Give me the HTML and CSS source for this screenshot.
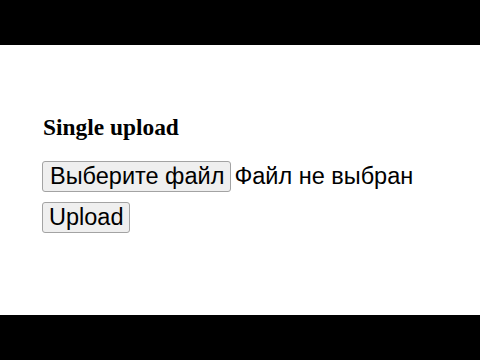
FILE: index.html
```html
<!DOCTYPE html>
<html>
<head>
<meta charset="utf-8">
<link rel="stylesheet" href="styles.css">
</head>
<body>
<div class="bar"></div>
<main class="page">
  <h3 class="title">Single upload</h3>
  <div class="file-row">
    <button class="btn btn-file" type="button">Выберите файл</button>
    <span class="file-status">Файл не выбран</span>
  </div>
  <div class="submit-row">
    <button class="btn" type="button">Upload</button>
  </div>
</main>
<div class="bar"></div>
</body>
</html>
```
FILE: styles.css
```css
html, body {
  margin: 0;
  padding: 0;
  background: #000;
}
body {
  width: 480px;
  height: 360px;
  display: flex;
  flex-direction: column;
  overflow: hidden;
}
.bar {
  height: 45px;
  background: #000;
  flex: none;
}
.page {
  height: 270px;
  flex: none;
  background: #fff;
  padding: 70px 0 0 42px;
  box-sizing: border-box;
}
.title {
  margin: 0 0 21px 1px;
  font-family: "Liberation Serif", "Times New Roman", serif;
  font-weight: bold;
  font-size: 23.4px;
  line-height: 25px;
  color: #000;
}
.file-row {
  display: flex;
  align-items: center;
  gap: 3px;
  margin-bottom: 10px;
}
.btn {
  font-family: "Liberation Sans", Arial, sans-serif;
  font-size: 23.5px;
  line-height: 25px;
  color: #000;
  background: #efefef;
  border: 1px solid #a3a3a3;
  border-radius: 3px;
  padding: 2px 6px;
  margin: 0;
  height: 31px;
  box-sizing: border-box;
}
.btn-file {
  padding: 2px 6px 2px 7px;
}
.file-status {
  font-family: "Liberation Sans", Arial, sans-serif;
  font-size: 23.5px;
  line-height: 25px;
  color: #000;
}
.submit-row {
  display: flex;
}
```
